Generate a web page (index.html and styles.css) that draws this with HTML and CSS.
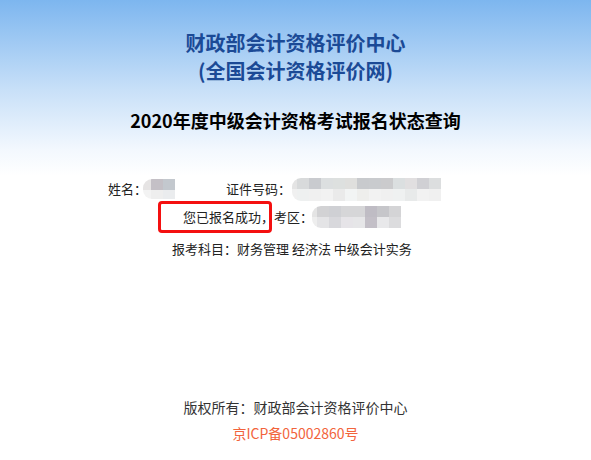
FILE: index.html
```html
<!DOCTYPE html>
<html lang="zh-CN">
<head>
<meta charset="utf-8">
<title>2020年度中级会计资格考试报名状态查询</title>
<link rel="stylesheet" href="styles.css">
</head>
<body>
<div class="header">
  <div class="org">财政部会计资格评价中心<br>(全国会计资格评价网)</div>
  <div class="subject">2020年度中级会计资格考试报名状态查询</div>
</div>
<div class="info">
  <div class="row row1">
    <span class="label">姓名：</span>
    <span class="mosaic m1">
      <span class="mrow"><i style="background:#e6e4e4;width:8px"></i><i style="background:#c4c0c6"></i><i style="background:#c3c8ce"></i></span>
      <span class="mrow"><i style="background:#f3f3f3;width:8px"></i><i style="background:#eeeeee"></i><i style="background:#eaecee"></i></span>
    </span>
    <span class="label id-label">证件号码：</span>
    <span class="mosaic m2">
      <span class="mrow"><i style="background:#e4e4e4;width:5px"></i><i style="background:#d8dadb"></i><i style="background:#c9cbcf"></i><i style="background:#dcdfe0"></i><i style="background:#dde0df"></i><i style="background:#dfdfdd"></i><i style="background:#c8cacd"></i><i style="background:#c9cbce"></i><i style="background:#cbcbcd"></i><i style="background:#dbdfe0"></i><i style="background:#e1dfe0"></i><i style="background:#d0d0d4"></i><i style="background:#dcdedf"></i></span>
      <span class="mrow"><i style="background:#f0f0f0;width:5px"></i><i style="background:#eef0f0"></i><i style="background:#f0f0f0"></i><i style="background:#f2f2f2"></i><i style="background:#eaeaea"></i><i style="background:#f2f4f4"></i><i style="background:#eeeeec"></i><i style="background:#f2f2f2"></i><i style="background:#f0f0f0"></i><i style="background:#eff1f1"></i><i style="background:#e8eaea"></i><i style="background:#f2f2f2"></i><i style="background:#f0f0f0"></i></span>
    </span>
  </div>
  <div class="row row2">
    <span class="label">您已报名成功，考区：</span>
    <span class="mosaic m3">
      <span class="mrow"><i style="background:#e4e4e4;width:5px"></i><i style="background:#d2d2d4"></i><i style="background:#cfd0d4"></i><i style="background:#d6d6d8"></i><i style="background:#d6d6d8"></i><i style="background:#bfbcc4"></i><i style="background:#c6c6ca"></i><i style="background:#d4d4d6"></i></span>
      <span class="mrow"><i style="background:#eeeeee;width:5px"></i><i style="background:#e4e4e6"></i><i style="background:#d8d8dc"></i><i style="background:#e6e4e8"></i><i style="background:#e6e6e8"></i><i style="background:#c3bfc7"></i><i style="background:#e8e8ea"></i><i style="background:#dcdcde"></i></span>
    </span>
    <span class="highlight"></span>
  </div>
  <div class="row row3">报考科目：财务管理 经济法 中级会计实务</div>
</div>
<div class="footer">
  <div class="copy">版权所有：财政部会计资格评价中心</div>
  <div class="icp">京ICP备05002860号</div>
</div>
</body>
</html>
```

FILE: styles.css
```css
* { box-sizing: border-box; }
html, body { margin: 0; padding: 0; background: #fff; }
body {
  width: 591px;
  font-family: "Noto Sans CJK SC", "Noto Sans", sans-serif;
  color: #222;
}
.header {
  height: 176px;
  background: linear-gradient(to bottom, #7db6ef 0px, #c8e0f8 90px, #f3f8fe 150px, #ffffff 176px);
  text-align: center;
  padding-top: 29px;
}
.org {
  font-size: 20px;
  font-weight: bold;
  line-height: 28px;
  color: #1b4a96;
}
.subject {
  margin-top: 22px;
  font-size: 18px;
  font-weight: bold;
  line-height: 26px;
  color: #000;
}
.info {
  font-size: 13px;
  line-height: 20px;
  color: #222;
}
.row {
  display: flex;
  align-items: center;
  position: relative;
}
.row1 { padding-left: 108px; height: 26px; }
.row2 { padding-left: 183px; height: 28px; margin-top: 1px; }
.row3 { padding-left: 172px; height: 20px; margin-top: 8px; }
.id-label { margin-left: 51px; }
.mosaic {
  display: inline-flex;
  flex-direction: column;
  border-radius: 9px 0 0 9px;
  overflow: hidden;
}
.mrow { display: flex; }
.mrow i { display: block; width: 12px; }
.m1 { height: 20px; margin-left: -4px; }
.m1 .mrow:first-child { height: 11px; }
.m1 .mrow:last-child { height: 9px; }
.m2 { height: 23px; margin-left: 1px; }
.m2 .mrow { height: 11.5px; }
.m3 { height: 22px; margin-left: -1px; }
.m3 .mrow { height: 11px; }
.highlight {
  position: absolute;
  left: 158px;
  top: -2px;
  width: 114px;
  height: 32px;
  border: 3px solid #f41010;
  border-radius: 4px;
}
.footer {
  margin-top: 138px;
  text-align: center;
  font-size: 14px;
  line-height: 20px;
}
.copy { color: #333; }
.icp { margin-top: 6px; color: #f2643c; }
```
